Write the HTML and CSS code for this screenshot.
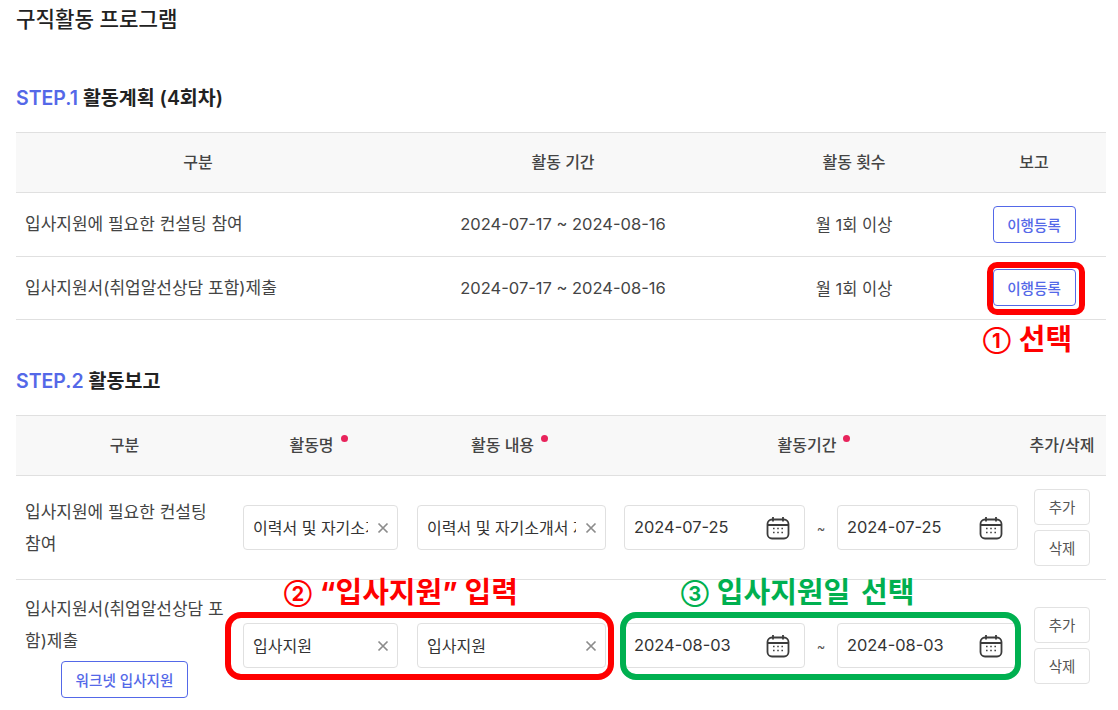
FILE: index.html
```html
<!DOCTYPE html>
<html lang="ko">
  <head>
    <meta charset="UTF-8" />
    <title>구직활동 프로그램</title>
    <link rel="stylesheet" href="styles.css">
  </head>
  <body>
    <svg class="icon-defs" width="0" height="0">
      <symbol id="calendar" viewBox="0 0 24 24">
        <rect x="1.5" y="3.5" width="21" height="19" rx="4.5" fill="none" stroke="#3c3c3c" stroke-width="1.8" />
        <path d="M1.5 9h21M7 1v4.5M17 1v4.5" fill="none" stroke="#3c3c3c" stroke-width="1.8" />
        <path d="M7 12.5h1.6M11.2 12.5h1.6M15.4 12.5h1.6M7 16.5h1.6M11.2 16.5h1.6M15.4 16.5h1.6" fill="none" stroke="#444" stroke-width="1.6" />
      </symbol>
      <symbol id="clear" viewBox="0 0 12 12">
        <path d="M1.5 1.5l9 9M10.5 1.5l-9 9" fill="none" stroke="#8c8c8c" stroke-width="1.7" />
      </symbol>
    </svg>

    <div class="page">
      <h1 class="page-title">구직활동 프로그램</h1>

      <h2 class="step-title step-title-first"><span class="step-no">STEP.1</span> 활동계획 (4회차)</h2>
      <table class="grid plan-grid">
        <colgroup>
          <col class="plan-c1" /><col class="plan-c2" /><col class="plan-c3" /><col class="plan-c4" />
        </colgroup>
        <thead>
          <tr><th>구분</th><th>활동 기간</th><th>활동 횟수</th><th>보고</th></tr>
        </thead>
        <tbody>
          <tr>
            <td class="left">입사지원에 필요한 컨설팅 참여</td>
            <td>2024-07-17 ~ 2024-08-16</td>
            <td>월 1회 이상</td>
            <td><button class="btn-line" type="button">이행등록</button></td>
          </tr>
          <tr>
            <td class="left">입사지원서(취업알선상담 포함)제출</td>
            <td>2024-07-17 ~ 2024-08-16</td>
            <td>월 1회 이상</td>
            <td><button class="btn-line" type="button">이행등록</button></td>
          </tr>
        </tbody>
      </table>

      <h2 class="step-title step-title-second"><span class="step-no">STEP.2</span> 활동보고</h2>
      <table class="grid report-grid">
        <colgroup>
          <col class="rep-c1" /><col class="rep-c2" /><col class="rep-c3" /><col class="rep-c4" /><col class="rep-c5" />
        </colgroup>
        <thead>
          <tr>
            <th>구분</th>
            <th><span class="required">활동명</span></th>
            <th><span class="required">활동 내용</span></th>
            <th><span class="required required-wide">활동기간</span></th>
            <th class="th-actions">추가/삭제</th>
          </tr>
        </thead>
        <tbody>
          <tr class="row-one">
            <td class="left">입사지원에 필요한 컨설팅 참여</td>
            <td>
              <div class="field field-name"><span class="field-text">이력서 및 자기소개서 제출</span><svg class="clear"><use href="#clear" /></svg></div>
            </td>
            <td>
              <div class="field"><span class="field-text">이력서 및 자기소개서 제출</span><svg class="clear"><use href="#clear" /></svg></div>
            </td>
            <td>
              <div class="dates">
                <div class="field date-field"><span class="field-text">2024-07-25</span><svg class="cal"><use href="#calendar" /></svg></div>
                <span class="tilde">~</span>
                <div class="field date-field"><span class="field-text">2024-07-25</span><svg class="cal"><use href="#calendar" /></svg></div>
              </div>
            </td>
            <td class="actions">
              <button class="btn-small" type="button">추가</button>
              <button class="btn-small" type="button">삭제</button>
            </td>
          </tr>
          <tr class="row-two">
            <td class="left">
              입사지원서(취업알선상담 포함)제출
              <div class="worknet"><button class="btn-line btn-worknet" type="button">워크넷 입사지원</button></div>
            </td>
            <td>
              <div class="field field-name"><span class="field-text">입사지원</span><svg class="clear"><use href="#clear" /></svg></div>
            </td>
            <td>
              <div class="field"><span class="field-text">입사지원</span><svg class="clear"><use href="#clear" /></svg></div>
            </td>
            <td>
              <div class="dates">
                <div class="field date-field"><span class="field-text">2024-08-03</span><svg class="cal"><use href="#calendar" /></svg></div>
                <span class="tilde">~</span>
                <div class="field date-field"><span class="field-text">2024-08-03</span><svg class="cal"><use href="#calendar" /></svg></div>
              </div>
            </td>
            <td class="actions">
              <button class="btn-small" type="button">추가</button>
              <button class="btn-small" type="button">삭제</button>
            </td>
          </tr>
        </tbody>
      </table>

      <!-- 안내 표시 (스크린샷 위에 그려진 주석) -->
      <div class="mark mark-red mark-one"></div>
      <div class="note note-red note-one"><span class="num">①</span>선택</div>
      <div class="mark mark-red mark-two"></div>
      <div class="note note-red note-two"><span class="num">②</span>“입사지원” 입력</div>
      <div class="mark mark-green mark-three"></div>
      <div class="note note-green note-three"><span class="num">③</span>입사지원일 선택</div>
    </div>
  </body>
</html>
```

FILE: styles.css
```css
* {
  margin: 0;
  padding: 0;
  box-sizing: border-box;
}

html,
body {
  height: 710px;
  overflow: hidden;
}

body {
  font-family: "Inter", "Noto Sans CJK KR", sans-serif;
  font-size: 16.5px;
  color: #444;
  background: #fff;
}

.icon-defs {
  position: absolute;
}

.page {
  position: relative;
  height: 710px;
  padding: 0 12px 0 16px;
}

.page-title {
  font-size: 21.2px;
  font-weight: 500;
  line-height: 28px;
  padding-top: 5px;
  color: #222;
}

.step-title {
  font-size: 19.5px;
  font-weight: 600;
  line-height: 26px;
  color: #222;
}

.step-title-first {
  margin-top: 52px;
  margin-bottom: 21px;
}

.step-title-second {
  margin-top: 48px;
  margin-bottom: 21px;
}

.step-no {
  color: #5468e8;
}

/* Tables */
.grid {
  width: 1090px;
  table-layout: fixed;
  border-collapse: collapse;
}

.grid th {
  height: 60px;
  padding-bottom: 3px;
  background: #f8f8f8;
  border-top: 1px solid #e0e0e0;
  border-bottom: 1px solid #e0e0e0;
  font-size: 16px;
  font-weight: 500;
  color: #444;
  text-align: center;
}

.grid td {
  border-bottom: 1px solid #e0e0e0;
  text-align: center;
  vertical-align: middle;
}

.grid td.left {
  text-align: left;
  padding-left: 9px;
  font-size: 17px;
  line-height: 32px;
}

.plan-c1 { width: 364px; }
.plan-c2 { width: 366px; }
.plan-c3 { width: 216px; }
.plan-c4 { width: 144px; }

.plan-grid td {
  height: 63.5px;
}

.rep-c1 { width: 217px; }
.rep-c2 { width: 175px; }
.rep-c3 { width: 207px; }
.rep-c4 { width: 412px; }
.rep-c5 { width: 79px; }

.row-one td {
  height: 104px;
}

.row-two td {
  height: 132px;
  border-bottom: 0;
}

.report-grid td.left {
  padding-right: 8px;
  word-break: break-all;
}

.grid .th-actions,
.grid .actions {
  padding-right: 9px;
}

.required {
  position: relative;
  display: inline-block;
  padding-right: 18px;
}

.required-wide {
  margin-right: 10px;
}

.required::after {
  content: "";
  position: absolute;
  top: 3px;
  right: 4px;
  width: 7px;
  height: 7px;
  border-radius: 50%;
  background: #e8245c;
}

/* Buttons */
.btn-line {
  width: 83px;
  height: 37px;
  background: #fff;
  border: 1px solid #5468e8;
  border-radius: 4px;
  color: #5468e8;
  font-family: inherit;
  font-size: 14.6px;
  font-weight: 500;
}

.worknet {
  padding-left: 36px;
  line-height: 0;
  margin-top: 4px;
}

.btn-worknet {
  width: 127px;
  line-height: normal;
}

.btn-small {
  display: block;
  width: 56px;
  height: 36px;
  margin: 0 auto;
  padding-bottom: 2px;
  background: #fff;
  border: 1px solid #e2e2e2;
  border-radius: 4px;
  color: #555;
  font-family: inherit;
  font-size: 14.5px;
}

.btn-small + .btn-small {
  margin-top: 5px;
}

/* Inputs */
.field {
  display: flex;
  align-items: center;
  height: 45px;
  margin: 0 9px;
  padding: 0 8px 0 9px;
  background: #fff;
  border: 1px solid #e0e0e0;
  border-radius: 4px;
  font-size: 16px;
  color: #333;
}

.field-name {
  margin: 0 10px;
}

.field-text {
  flex: 1;
  min-width: 0;
  padding-bottom: 2px;
  overflow: hidden;
  white-space: nowrap;
  text-align: left;
}

.clear {
  flex: none;
  width: 12px;
  height: 12px;
  margin-left: 9px;
}

.dates {
  display: flex;
  align-items: center;
  margin: 0 9px;
}

.date-field {
  flex: 1;
  margin: 0;
  padding: 0 14px 0 9px;
  font-size: 16.4px;
}

.tilde {
  flex: none;
  width: 32px;
  font-size: 13px;
  color: #555;
}

.cal {
  flex: none;
  width: 24px;
  height: 24px;
}

/* Annotations drawn over the screenshot */
.mark {
  position: absolute;
  border-style: solid;
}

.mark-red {
  border-color: #f00;
}

.mark-green {
  border-color: #00b050;
}

.mark-one {
  left: 987px;
  top: 262px;
  width: 98px;
  height: 53px;
  border-width: 6px;
  border-radius: 10px;
}

.mark-two {
  left: 225px;
  top: 612px;
  width: 389px;
  height: 68px;
  border-width: 6px;
  border-radius: 16px;
}

.mark-three {
  left: 620px;
  top: 612px;
  width: 401px;
  height: 68px;
  border-width: 6px;
  border-radius: 16px;
}

.note {
  position: absolute;
  font-size: 29px;
  font-weight: 700;
  line-height: 34px;
  white-space: nowrap;
}

.num {
  font-size: 20px;
  font-weight: 700;
  margin-right: 8px;
  vertical-align: 2px;
}

.note-red {
  color: #f00;
}

.note-green {
  color: #00b050;
}

.note-one {
  left: 983px;
  top: 323px;
}

.note-two {
  left: 284px;
  top: 576px;
}

.note-three {
  left: 681px;
  top: 576px;
  word-spacing: 4px;
}
```
